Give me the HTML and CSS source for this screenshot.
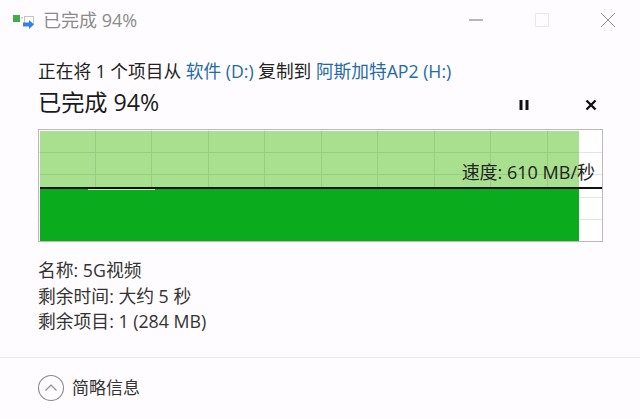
FILE: index.html
```html
<!DOCTYPE html>
<html lang="zh">
<head>
<meta charset="utf-8">
<title>已完成 94%</title>
<link rel="stylesheet" href="styles.css">
</head>
<body>
<div class="window">
  <header class="titlebar">
    <svg class="app-icon" width="22" height="16" viewBox="0 0 22 16">
      <rect x="0" y="0" width="7" height="7" fill="#3fae49"/>
      <rect x="8" y="2" width="2" height="1.500" fill="#c9c9c9"/>
      <rect x="11.500" y="1.500" width="9" height="7" fill="#fff" stroke="#c4c4c4"/>
      <path d="M10 7.500h6V5l5 4.500L16 14v-2.500h-6z" fill="#2f83e8"/>
    </svg>
    <span class="title-text">已完成 94%</span>
    <div class="win-controls">
      <svg class="win-btn" width="16" height="16" viewBox="0 0 16 16"><path d="M1 8h14" stroke="#8a8a8a" stroke-width="1.200"/></svg>
      <svg class="win-btn" width="16" height="16" viewBox="0 0 16 16"><rect x="1.500" y="1.500" width="13" height="13" fill="none" stroke="#e8e8e8"/></svg>
      <svg class="win-btn" width="16" height="16" viewBox="0 0 16 16"><path d="M1 1l14 14M15 1L1 15" stroke="#8f8f8f" stroke-width="1"/></svg>
    </div>
  </header>
  <main class="content">
    <p class="copy-line">正在将 1 个项目从 <span class="link">软件 (D:)</span> 复制到 <span class="link">阿斯加特AP2 (H:)</span></p>
    <div class="status-row">
      <h1 class="status">已完成 94%</h1>
      <div class="actions">
        <svg width="12" height="12" viewBox="0 0 12 12"><path d="M1.500 1h3v10h-3zM7.500 1h3v10h-3z" fill="#111"/></svg>
        <svg width="12" height="12" viewBox="0 0 12 12"><path d="M1.500 1.500l9 9M10.500 1.500l-9 9" stroke="#111" stroke-width="2.400"/></svg>
      </div>
    </div>
    <div class="chart">
      <div class="fill-light"></div>
      <div class="fill-dark"></div>
      <div class="peak"></div>
      <div class="speed-line"></div>
      <span class="speed">速度: 610 MB/秒</span>
    </div>
    <dl class="details">
      <div>名称: 5G视频</div>
      <div>剩余时间: 大约 5 秒</div>
      <div>剩余项目: 1 (284 MB)</div>
    </dl>
  </main>
  <footer class="footer">
    <svg width="28" height="28" viewBox="0 0 28 28"><circle cx="14" cy="14" r="12.500" fill="none" stroke="#8c8c8c" stroke-width="1.100"/><path d="M8.500 16.500L14 11l5.500 5.500" fill="none" stroke="#8c8c8c" stroke-width="1.100"/></svg>
    <span class="less">简略信息</span>
  </footer>
</div>
</body>
</html>
```
FILE: styles.css
```css
* { box-sizing: border-box; }
html, body { margin: 0; padding: 0; }
body {
  width: 640px;
  height: 419px;
  overflow: hidden;
  background: #fefcfe;
  font-family: "Open Sans", "Noto Sans CJK SC", sans-serif;
  color: #222;
}
.window { display: flex; flex-direction: column; height: 419px; }
.titlebar {
  display: flex;
  align-items: center;
  height: 40px;
  padding: 0 24px 0 13px;
}
.app-icon { margin: 6px 8px 0 0; }
.title-text { font-size: 18px; line-height: 20px; color: #8b8b8b; }
.win-controls { display: flex; margin-left: auto; gap: 50px; align-items: center; }
.content { padding: 21px 37px 0 38px; flex: 1; }
.copy-line { margin: 0; font-size: 17.700px; line-height: 20px; color: #222; white-space: nowrap; }
.link { color: #1f6bab; }
.status-row { display: flex; align-items: center; justify-content: space-between; height: 30px; margin-top: 6px; }
.status { margin: 0; font-size: 23.200px; line-height: 30px; font-weight: 400; color: #1a1a1a; }
.actions { display: flex; gap: 55px; padding: 5px 0 0 0; margin-right: 6px; }
.chart {
  position: relative;
  width: 565px;
  height: 113px;
  margin-top: 12px;
  border: 1px solid #b9b9b9;
  background-color: #fff;
  background-image:
    repeating-linear-gradient(90deg, transparent 0 56px, #e4e4e4 56px 57px, transparent 57px 112px, #e4e4e4 112px 113px),
    linear-gradient(180deg, transparent 22px, #e4e4e4 22px 23px, transparent 23px 44px, #e4e4e4 44px 45px, transparent 45px 67px, #e4e4e4 67px 68px, transparent 68px 89px, #e4e4e4 89px 90px, transparent 90px);
}
.fill-light {
  position: absolute;
  left: 1px; top: 1px;
  width: 539px; height: 57px;
  background-color: #a9e08f;
  background-image:
    repeating-linear-gradient(90deg, transparent 0 55px, #98cc80 55px 56px, transparent 56px 111px, #98cc80 111px 112px, transparent 112px 113px),
    linear-gradient(180deg, transparent 21px, #98cc80 21px 22px, transparent 22px 43px, #98cc80 43px 44px, transparent 44px);
}
.fill-dark {
  position: absolute;
  left: 1px; top: 58px;
  width: 539px; height: 53px;
  background: #0aab1c;
}
.peak {
  position: absolute;
  left: 49px; top: 59px;
  width: 67px; height: 1px;
  background: #c5eeb0;
}
.speed-line {
  position: absolute;
  left: 1px; top: 57px;
  width: 562px; height: 2px;
  background: #111;
}
.speed {
  position: absolute;
  right: 7px; top: 31px;
  font-size: 18px;
  line-height: 22px;
  color: #222;
}
.details { margin: 16px 0 0; font-size: 17.800px; line-height: 25.500px; color: #333; }
.footer {
  display: flex;
  align-items: center;
  gap: 7px;
  height: 62px;
  padding: 0 0 2px 37px;
  border-top: 1px solid #ebe9eb;
}
.less { font-size: 17px; line-height: 20px; color: #333; }
```
